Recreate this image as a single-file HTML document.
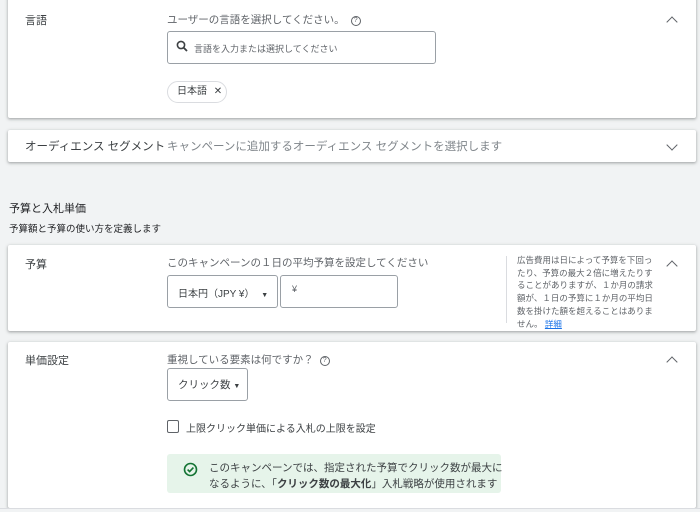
<!DOCTYPE html><html><head><meta charset="utf-8"><style>
body{margin:0;width:700px;height:511px;overflow:hidden;background:#f1f3f4;font-family:"Liberation Sans","Noto Sans CJK JP",sans-serif;color:#3c4043;position:relative}
.a{position:absolute}
.card{position:absolute;left:8px;width:688px;background:#fff;box-shadow:0 1px 2px rgba(60,64,67,.3),0 1px 3px 1px rgba(60,64,67,.15);border-radius:2px}
.t{font-size:11px;color:#3c4043}
.g{font-size:10.5px;color:#5f6368}
.box{position:absolute;border:1px solid #9aa0a6;border-radius:3px;background:#fff}
.chev{position:absolute;width:7px;height:7px;border-left:1.6px solid #5f6368;border-top:1.6px solid #5f6368}
.up{transform:rotate(45deg)}.dn{transform:rotate(225deg)}
.q{display:inline-block;width:8px;height:8px;border:1px solid #5f6368;border-radius:50%;font-size:7px;line-height:8px;text-align:center;vertical-align:1px;margin-left:6px}
</style></head><body>
<div class="card" style="top:-4px;height:122px"></div>
<div class="a t" style="left:25px;top:12px">言語</div>
<div class="a g" style="left:167px;top:12px">ユーザーの言語を選択してください。<span class="q">?</span></div>
<div class="chev up" style="left:668px;top:18px"></div>
<div class="box" style="left:167px;top:31px;width:267px;height:31px"></div>
<svg class="a" style="left:176px;top:40px" width="12" height="12" viewBox="0 0 12 12"><circle cx="5" cy="5" r="3.6" fill="none" stroke="#3c4043" stroke-width="1.6"/><path d="M7.6 7.6L11 11" stroke="#3c4043" stroke-width="1.8"/></svg>
<div class="a" style="left:194px;top:42px;font-size:9px;color:#5f6368">言語を入力または選択してください</div>
<div class="a" style="left:167px;top:81px;width:58px;height:20px;border:1px solid #dadce0;border-radius:11px;font-size:10px;line-height:20px;color:#3c4043;text-indent:9px">日本語 <span style="margin-left:4px">✕</span></div>

<div class="card" style="top:130px;height:32px"></div>
<div class="a" style="left:25px;top:138px;font-size:11.5px;color:#3c4043">オーディエンス セグメント</div>
<div class="a" style="left:167px;top:138px;font-size:11.5px;color:#80868b">キャンペーンに追加するオーディエンス セグメントを選択します</div>
<div class="chev dn" style="left:668px;top:141px"></div>

<div class="a" style="left:9px;top:200px;font-size:11px;color:#202124">予算と入札単価</div>
<div class="a" style="left:9px;top:221px;font-size:9.5px;color:#202124">予算額と予算の使い方を定義します</div>

<div class="card" style="top:245px;height:86px"></div>
<div class="a t" style="left:25px;top:256px">予算</div>
<div class="a g" style="left:167px;top:255px">このキャンペーンの１日の平均予算を設定してください</div>
<div class="box" style="left:167px;top:275px;width:109px;height:31px"></div>
<div class="a" style="left:178px;top:285px;font-size:10px;color:#3c4043">日本円（JPY ¥） <span style="font-size:7px;margin-left:4px">▼</span></div>
<div class="box" style="left:280px;top:275px;width:116px;height:31px"></div>
<div class="a" style="left:292px;top:284px;font-size:9px;color:#5f6368">¥</div>
<div class="a" style="left:506px;top:256px;width:1px;height:67px;background:#dadce0"></div>
<div class="a" style="left:517px;top:254px;width:136px;font-size:8.5px;line-height:12.7px;color:#5f6368">広告費用は日によって予算を下回ったり、予算の最大２倍に増えたりすることがありますが、１か月の請求額が、１日の予算に１か月の平均日数を掛けた額を超えることはありません。 <span style="color:#1a73e8;text-decoration:underline">詳細</span></div>
<div class="chev up" style="left:668px;top:262px"></div>

<div class="card" style="top:342px;height:166px"></div>
<div class="a t" style="left:25px;top:352px">単価設定</div>
<div class="a g" style="left:167px;top:352px">重視している要素は何ですか？<span class="q">?</span></div>
<div class="chev up" style="left:668px;top:358px"></div>
<div class="box" style="left:167px;top:368px;width:79px;height:31px"></div>
<div class="a" style="left:178px;top:377px;font-size:10.5px;color:#3c4043">クリック数 <span style="font-size:7px">▼</span></div>
<div class="a" style="left:167px;top:420px;width:10px;height:11px;border:1.6px solid #5f6368;border-radius:2px"></div>
<div class="a t" style="left:186px;top:420px;font-size:10px">上限クリック単価による入札の上限を設定</div>
<div class="a" style="left:167px;top:454px;width:334px;height:39px;background:#e6f4ea;border-radius:3px"></div>
<svg class="a" style="left:183px;top:462px" width="15" height="15" viewBox="0 0 15 15"><circle cx="7.5" cy="7.5" r="6" fill="none" stroke="#137333" stroke-width="1.6"/><path d="M4.6 7.6l2 2 3.8-4" fill="none" stroke="#137333" stroke-width="1.6"/></svg>
<div class="a" style="left:209px;top:460px;font-size:10.5px;line-height:16px;color:#3c4043">このキャンペーンでは、指定された予算でクリック数が最大に<br>なるように、「<b>クリック数の最大化</b>」入札戦略が使用されます</div>
<div class="a" style="left:0;top:508px;width:700px;height:3px;background:#f1f3f4;border-top:1px solid #dadce0"></div>
</body></html>
